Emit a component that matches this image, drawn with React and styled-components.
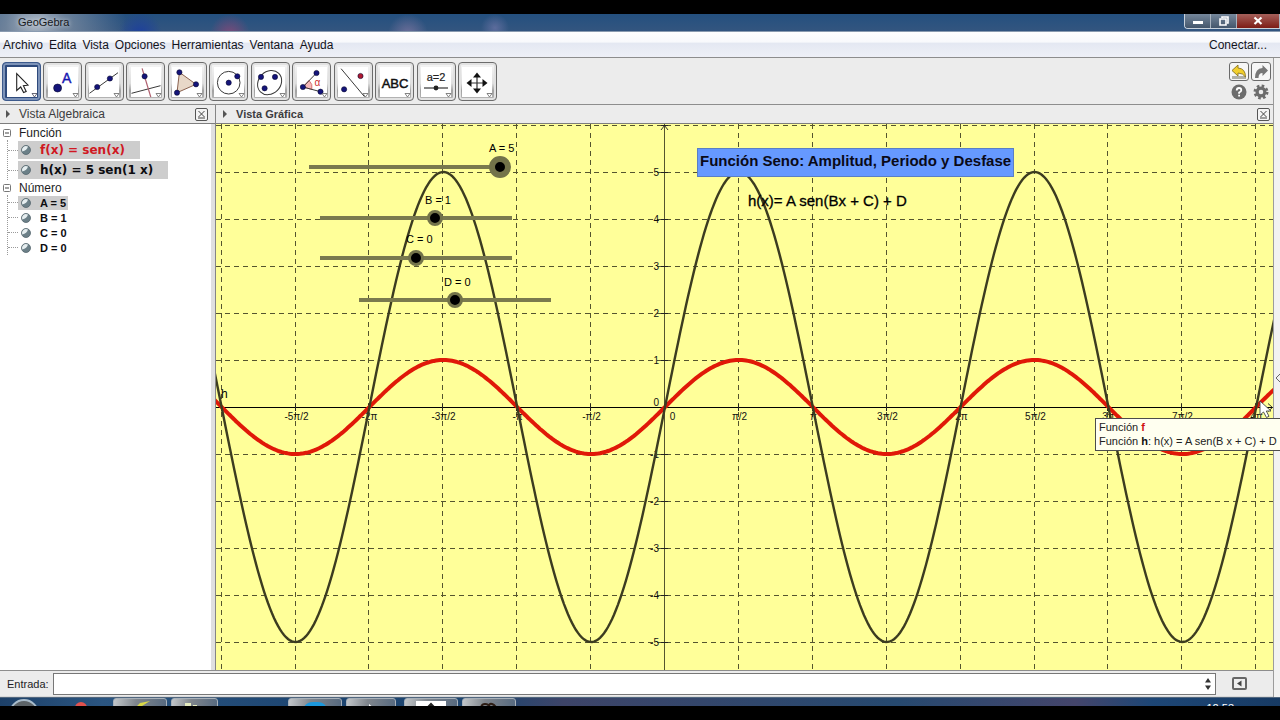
import React, { useState } from "react";
import styled, { createGlobalStyle, css } from "styled-components";

const GlobalStyle = createGlobalStyle`
  * { box-sizing: border-box; }
  body {
    margin: 0;
    background: #000;
    font-family: "Liberation Sans", Arial, sans-serif;
    font-size: 12px;
    color: #1c1c24;
  }
  button, input { font: inherit; color: inherit; }
`;

const Page = styled.div`
  display: flex;
  flex-direction: column;
  min-height: 100vh;
  padding: 14px 0;
  overflow: hidden;
`;

const TitleBar = styled.header`
  display: flex;
  justify-content: space-between;
  height: 18px;
  padding-left: 18px;
  border-bottom: 1px solid #8a9bb0;
  background:
    radial-gradient(circle at 36px 10px, #b4bdc8e6 0, #8e9aa9aa 30px, #8e9aa900 90px),
    radial-gradient(circle at 140px 20px, #1c3f9e 0, #1c3f9e00 22px),
    radial-gradient(circle at 230px 20px, #7a4a7a 0, #6a4a7a00 20px),
    radial-gradient(circle at 408px 20px, #6d6f9a 0, #6d6f9a00 20px),
    radial-gradient(circle at 495px 14px, #5c6c9c 0, #5c6c9c00 14px),
    linear-gradient(#24507f, #33557f);
`;

const AppName = styled.h1`
  margin: 0;
  font-size: 11px;
  line-height: 17px;
  font-weight: 400;
  color: #16181c;
  text-shadow: 0 0 4px #dfe5ec;
`;

const WindowButtons = styled.div`
  display: flex;
  height: 15px;
  border: 1px solid #c9d2dc;
  border-top: 0;
  border-right: 0;
  border-radius: 0 0 0 4px;
  overflow: hidden;
`;

const WindowButton = styled.button`
  display: flex;
  align-items: center;
  justify-content: center;
  width: ${(p) => (p.$close ? 43 : 26)}px;
  padding: 0;
  border: 0;
  border-right: 1px solid #aab4c0;
  background: ${(p) => (p.$close ? "linear-gradient(#a5605a, #7d1c16)" : "linear-gradient(#75879b, #44566c)")};
`;

const MenuBar = styled.nav`
  display: flex;
  align-items: center;
  gap: 6px;
  height: 26px;
  padding: 1px 13px 0 3px;
  border-bottom: 1px solid #8d8d8d;
  background: linear-gradient(#ffffff 0, #f8f9fc 40%, #e4e8f2 45%, #eef0f7 100%);
`;

const MenuLink = styled.a`
  color: #14141c;
  text-decoration: none;
  line-height: 16px;
  ${(p) => p.$end && css`margin-left: auto;`}
`;

const Workspace = styled.div`
  display: flex;
  flex: 1;
  background: #ececec;
`;

const Main = styled.div`
  display: flex;
  flex: 1;
  flex-direction: column;
  min-width: 0;
`;

const Gutter = styled.aside`
  display: flex;
  align-items: center;
  width: 7px;
  border-left: 1px solid #9c9c9c;
  background: #f2f2f2;
`;

const ToolBar = styled.div`
  display: flex;
  justify-content: space-between;
  height: 47px;
  padding: 4px 2px 0 2px;
  border-bottom: 1px solid #8d8d8d;
`;

const Tools = styled.div`
  display: flex;
  justify-content: space-between;
  width: 495px;
`;

const ToolButton = styled.button`
  display: flex;
  align-items: center;
  justify-content: center;
  width: 39px;
  height: 39px;
  padding: 0;
  border: 1px solid #6c6c6c;
  border-radius: 4px;
  background: linear-gradient(#f6f6f6 0, #dedede 55%, #a2a2a2 75%, #b8b8b8 100%);
  box-shadow: inset 0 0 0 2px #e2e2e2;
  ${(p) =>
    p.$active &&
    css`
      border-color: #3d5a8c;
      background: #2e4a7c;
      box-shadow: inset 0 0 0 2px #7d93b8;
    `}
`;

const ToolOptions = styled.div`
  display: grid;
  grid-template-columns: 20px 20px;
  grid-template-rows: 19px 20px;
  gap: 1px 2px;
`;

const OptionButton = styled.button`
  display: flex;
  align-items: center;
  justify-content: center;
  padding: 0;
  border: ${(p) => (p.$framed ? "1px solid #6a6a6a" : "0")};
  border-radius: 3px;
  background: ${(p) => (p.$framed ? "#f6f6f6" : "none")};
`;

const Views = styled.div`
  display: flex;
  flex: 1;
`;

const AlgebraView = styled.section`
  display: flex;
  flex-direction: column;
  width: 216px;
  border-right: 1px solid #858585;
  background: #fff;
  box-shadow: inset -4px 0 0 #e0e0e0;
`;

const GraphView = styled.section`
  display: flex;
  flex: 1;
  flex-direction: column;
  min-width: 0;
`;

const ViewHeader = styled.header`
  display: flex;
  align-items: center;
  gap: 9px;
  height: 19px;
  padding: 0 ${(p) => (p.$wide ? 3 : 7)}px 0 ${(p) => (p.$wide ? 7 : 6)}px;
  border-bottom: 1px solid #7d7d7d;
  background: #ececec;
`;

const ViewTitle = styled.h2`
  flex: 1;
  margin: 0;
  font-size: ${(p) => (p.$strong ? 11 : 12)}px;
  line-height: 16px;
  font-weight: ${(p) => (p.$strong ? 700 : 400)};
  color: #3c3c40;
`;

const CloseView = styled.button`
  display: flex;
  align-items: center;
  justify-content: center;
  width: 13px;
  height: 13px;
  padding: 0;
  border: 1px solid #555;
  border-radius: 2px;
  background: #f4f4f4;
`;

const Tree = styled.ul`
  margin: 0;
  padding: 1px 0 0;
  list-style: none;
`;

const Branch = styled.ul`
  margin: 0 0 0 7px;
  padding: 0;
  list-style: none;
  border-left: 1px dotted #9a9a9a;
`;

const GroupLabel = styled.div`
  display: flex;
  align-items: center;
  gap: 8px;
  height: 15px;
  padding-left: 3px;
`;

const TreeRow = styled.li`
  display: flex;
  align-items: center;
  height: ${(p) => (p.$tall ? 20 : 15)}px;
  &::before {
    content: "";
    width: 10px;
    border-top: 1px dotted #9a9a9a;
  }
`;

const TreeItem = styled.button`
  display: flex;
  align-items: center;
  gap: 9px;
  height: ${(p) => (p.$tall ? 18 : 14)}px;
  padding: 0 ${(p) => (p.$tall ? 15 : 2)}px 0 3px;
  border: 0;
  background: ${(p) => (p.$selected ? "#cdcdcd" : "none")};
  color: ${(p) => p.$color || "#0c0c10"};
  font-family: ${(p) => (p.$tall ? '"DejaVu Sans", sans-serif' : "inherit")};
  font-size: ${(p) => (p.$tall ? 12 : 11)}px;
  font-weight: 700;
  white-space: nowrap;
`;

const Canvas = styled.div`
  position: relative;
  flex: 1;
  background: #ffff99;
`;

const Plot = styled.svg`
  position: absolute;
  inset: 0;
  width: 100%;
  height: 100%;
  font-size: 10px;
`;

const Banner = styled.div`
  position: absolute;
  left: 481px;
  top: 24px;
  height: 29px;
  padding: 0 2px;
  border: 1px solid #5a7fc4;
  background: #6699ff;
  color: #0a0a18;
  font-size: 15px;
  font-weight: 700;
  line-height: 24px;
  white-space: nowrap;
`;

const Formula = styled.div`
  position: absolute;
  left: 532px;
  top: 67px;
  color: #000;
  font-size: 15px;
  line-height: 20px;
  white-space: nowrap;
  -webkit-text-stroke: 0.3px #000;
`;

const SliderBox = styled.div`
  position: absolute;
  left: ${(p) => p.$x}px;
  top: ${(p) => p.$y}px;
`;

const SliderLabel = styled.label`
  position: absolute;
  left: ${(p) => p.$x}px;
  bottom: 100%;
  padding-bottom: ${(p) => p.$gap}px;
  color: #000;
  font-size: 11px;
  line-height: 14px;
  white-space: nowrap;
`;

const thumb = css`
  appearance: none;
  width: ${(p) => p.$thumb}px;
  height: ${(p) => p.$thumb}px;
  border: ${(p) => (p.$thumb > 16 ? 6 : 3)}px solid #73734a;
  border-radius: 50%;
  background: #000;
`;

const Range = styled.input`
  appearance: none;
  display: block;
  width: ${(p) => 190 + p.$thumb}px;
  height: ${(p) => p.$thumb}px;
  margin: 0;
  background: linear-gradient(#7a7a4e, #7a7a4e) center / calc(100% - ${(p) => p.$thumb - 2}px) 4px no-repeat;
  &::-webkit-slider-thumb { ${thumb} }
  &::-moz-range-thumb { ${thumb} }
`;

const Tooltip = styled.div`
  position: absolute;
  left: 879px;
  top: 294px;
  padding: 1px 3px 2px;
  border: 1px solid #4c4c4c;
  background: #fffff0;
  color: #222;
  font-size: 11px;
  line-height: 14px;
  white-space: nowrap;
  p { margin: 0; }
  b { color: #111; }
  p:first-child b { color: #d01010; }
`;

const Pointer = styled.svg`
  position: absolute;
  left: 1043px;
  top: 276px;
`;

const InputBar = styled.form`
  display: flex;
  align-items: center;
  height: 27px;
  padding: 0 26px 0 7px;
  border-top: 1px solid #8d8d8d;
  border-bottom: 1px solid #d9d9d9;
  label { width: 46px; font-size: 11px; }
`;

const InputField = styled.div`
  display: flex;
  align-items: center;
  flex: 1;
  height: 22px;
  padding-right: 3px;
  margin-right: 16px;
  border: 1px solid #777;
  background: #fff;
  input { flex: 1; height: 18px; min-width: 0; border: 0; outline: 0; background: none; }
`;

const PlainButton = styled.button`
  display: flex;
  padding: 0;
  border: 0;
  background: none;
`;

const TaskBar = styled.footer`
  display: flex;
  height: 9px;
  overflow: hidden;
  border-top: 1px solid #51677f;
  background: linear-gradient(90deg, #1d4068 0, #2b5580 8%, #1c4470 25%, #1f466f 38%, #3d4468 44%, #26496f 70%, #44456b 84%, #1d4675 90%, #173a63 100%);
`;

const TaskButton = styled.button`
  display: flex;
  align-items: flex-start;
  justify-content: center;
  width: ${(p) => p.$w}px;
  height: 24px;
  margin-left: ${(p) => p.$gap}px;
  padding: 0;
  border: 1px solid #a7b0b9;
  border-radius: 3px;
  background: linear-gradient(100deg, #c3c7ca 0, #80868d 40%, #53677e 100%);
`;

const StartButton = styled.button`
  width: 30px;
  height: 30px;
  margin: 1px 0 0 9px;
  padding: 0;
  border: 2px solid #a9bccb;
  border-radius: 50%;
  background: #5d6468;
`;

const RecordDot = styled.span`
  width: 12px;
  height: 12px;
  margin: 4px 0 0 36px;
  border-radius: 50%;
  background: #e0514e;
`;

const Clock = styled.time`
  margin: 4px 46px 0 auto;
  color: #fff;
  font-size: 11px;
  line-height: 12px;
`;

const NAVY = "#14147a";
const Dot = ({ x, y, r = 2.6, fill = NAVY }) => <circle cx={x} cy={y} r={r} fill={fill} stroke="#080830" strokeWidth="0.6" />;
const ink = { stroke: "#3a3a3a", strokeWidth: 1, fill: "none" };

const tools = [
  ["Elige y mueve", <path d="M10.7 7.5V24.5L14.7 21L17.6 26.6L20.2 25.4L17.4 19.8L22 19.2Z" fill="#fff" stroke="#222" strokeWidth="1.1" />],
  ["Punto", <><Dot x={10.6} y={22} r={4} /><text x="15" y="17" fontSize="14" fill="#1515b0" stroke="#1515b0" strokeWidth="0.4">A</text></>],
  ["Recta", <><path {...ink} d="M1.5 27.3L30 6.7" /><Dot x={9.2} y={21} /><Dot x={21.9} y={12.5} /></>],
  ["Perpendicular", <><path {...ink} d="M1.5 27.3L30.5 19.7" /><path d="M12.1 2.3L20.8 31" stroke="#b06070" fill="none" strokeWidth="1.2" /><Dot x={14.6} y={10.3} /></>],
  ["Polígono", <><path d="M8.4 6.3L25 18.3L6 26.7Z" fill="#e8d8c8" stroke="#8a6250" /><Dot x={8.4} y={6.3} /><Dot x={25} y={18.3} /><Dot x={6} y={26.7} /></>],
  ["Circunferencia", <><circle {...ink} cx="15.7" cy="16.7" r="11.3" /><Dot x={15.7} y={16.7} /><Dot x={24.3} y={10.3} /></>],
  ["Elipse", <><ellipse {...ink} cx="15.6" cy="16.6" rx="13" ry="11" transform="rotate(-45 15.6 16.6)" /><Dot x={7} y={10.9} /><Dot x={21} y={10.9} /><Dot x={10.6} y={22.3} /></>],
  ["Ángulo", <><path d="M6.9 21L13 14.4A9 9 0 0 1 15.8 23.4Z" fill="#f6b8b8" stroke="#d06060" strokeWidth="0.8" /><path {...ink} d="M20.5 7L6.9 21L24.5 25.7" /><Dot x={20.5} y={7} /><Dot x={6.9} y={21} /><Dot x={24.5} y={25.7} /><text x="18.5" y="19.5" fontSize="10" fill="#d03030">α</text></>],
  ["Simetría", <><path {...ink} d="M4.1 2.7L27.5 30.7" /><Dot x={23.5} y={10} fill="#b01830" /><Dot x={7.1} y={23.3} /></>],
  ["Texto", <text x="16" y="21.5" textAnchor="middle" fontSize="13" fill="#111" stroke="#111" strokeWidth="0.5">ABC</text>],
  ["Deslizador", <><text x="16" y="15" textAnchor="middle" fontSize="11" fill="#222" stroke="#222" strokeWidth="0.2">a=2</text><path d="M4 22H28" stroke="#333" strokeWidth="1.2" /><circle cx="16" cy="22" r="2.4" fill="#222" /></>],
  ["Desplaza vista", <><path d="M16 10V24M9 17H23" stroke="#333" strokeWidth="1.2" /><path d="M16 6.5L20 11.5H12ZM16 27.5L20 22.5H12ZM5.5 17L10.5 13V21ZM26.5 17L21.5 13V21Z" fill="#111" /></>],
];

const ToolIcon = ({ children, active }) => (
  <svg width="32" height="32" viewBox="0 0 32 32" aria-hidden="true">
    <rect x="1" y="1" width="30" height="30" fill="#fff" />
    {children}
    <path d="M26 27.5H31L28.5 31Z" fill="#fff" stroke={active ? "#445" : "#666"} strokeWidth="0.8" />
  </svg>
);

const Disclosure = () => (
  <svg width="4" height="8" viewBox="0 0 4 8" aria-hidden="true"><path d="M0 0L4 4L0 8Z" fill="#555" /></svg>
);

const CloseIcon = () => (
  <svg width="9" height="9" viewBox="0 0 9 9" aria-hidden="true"><path d="M1.5 1L7.5 7M7.5 1L1.5 7M1 8H8" stroke="#444" strokeWidth="1" /></svg>
);

const Collapse = () => (
  <svg width="8" height="8" viewBox="0 0 8 8" aria-hidden="true"><rect x="0.5" y="0.5" width="7" height="7" rx="1" fill="#fff" stroke="#777" /><path d="M2 4H6" stroke="#444" /></svg>
);

const Marble = () => (
  <svg width="10" height="10" viewBox="0 0 10 10" aria-hidden="true"><circle cx="5" cy="5" r="4.5" fill="#6c8088" stroke="#56676e" strokeWidth="0.8" /><path d="M1.2 6.4A4 4 0 0 1 7 1.6Q6 5.800 1.2 6.4Z" fill="#e6eef0" /></svg>
);

/* Horizontal scale: one grid column is half of pi. Vertical scale: one row is one unit. */
const ORIGIN = { x: 449, y: 283 };
const HALF_PI = 73.9;
const UNIT = 47;

const wave = (amplitude) => {
  const points = [];
  for (let x = -2; x <= 1060; x += 2) {
    const angle = ((x - ORIGIN.x) / HALF_PI) * (Math.PI / 2);
    points.push(`${x},${(ORIGIN.y - amplitude * UNIT * Math.sin(angle)).toFixed(1)}`);
  }
  return points.join(" ");
};

const columns = Array.from({ length: 15 }, (_, i) => i - 6);
const rows = Array.from({ length: 12 }, (_, i) => i - 5);

const piLabel = (k) => {
  if (k === 0) return "0";
  const sign = k < 0 ? "-" : "";
  const n = Math.abs(k);
  if (n % 2) return `${sign}${n === 1 ? "" : n}π/2`;
  return `${sign}${n === 2 ? "" : n / 2}π`;
};

const colX = (k) => Math.round(ORIGIN.x + k * HALF_PI - 1) + 0.5;
const rowY = (k) => ORIGIN.y - k * UNIT + 0.5;

const FunctionPlot = () => (
  <Plot role="img" aria-label="Gráfica de f y h">
    <g stroke="#55552e" strokeWidth="1" strokeDasharray="5 4">
      {columns.filter((k) => k !== 0).map((k) => <line key={k} x1={colX(k)} x2={colX(k)} y1="0" y2="100%" />)}
      {rows.filter((k) => k !== 0).map((k) => <line key={k} y1={rowY(k)} y2={rowY(k)} x1="0" x2="100%" />)}
    </g>
    <line x1="0" x2="100%" y1={rowY(0)} y2={rowY(0)} stroke="#000" />
    <line x1={colX(0)} x2={colX(0)} y1="0" y2="100%" stroke="#55552e" />
    <path d="M445 6L448.5 1.5L452 6" fill="none" stroke="#333" />
    <path d="M1052 279.5L1056.500 283.5L1052 287.5" fill="none" stroke="#333" />
    <g stroke="#222">
      {columns.map((k) => <line key={k} x1={colX(k)} x2={colX(k)} y1="280" y2="287" />)}
      {rows.map((k) => <line key={k} y1={rowY(k)} y2={rowY(k)} x1="445" x2="452" />)}
    </g>
    <g fill="#111">
      {columns.slice(1).map((k) => (
        <text key={k} x={colX(k) + (k === 0 ? 8 : 1)} y="296" textAnchor="middle">{piLabel(k)}</text>
      ))}
      {rows.slice(0, 11).map((k) => (
        <text key={k} x="443" y={rowY(k) + (k === 0 ? -2 : 3)} textAnchor="end">{k}</text>
      ))}
    </g>
    <polyline points={wave(1)} fill="none" stroke="#e01808" strokeWidth="4" />
    <polyline points={wave(5)} fill="none" stroke="#3c3c20" strokeWidth="2.4" />
    <text x="5" y="274" fontSize="12">h</text>
  </Plot>
);

const sliders = [
  { name: "A", start: 5, x: 83, y: 32, thumb: 22, labelX: 190, gap: 1 },
  { name: "B", start: 1, x: 97, y: 86, thumb: 16, labelX: 112, gap: 3 },
  { name: "C", start: 0, x: 97, y: 126, thumb: 16, labelX: 93, gap: 4 },
  { name: "D", start: 0, x: 136, y: 168, thumb: 16, labelX: 92, gap: 3 },
];

const Slider = ({ name, start, x, y, thumb: size, labelX, gap }) => {
  const [value, setValue] = useState(start);
  return (
    <SliderBox $x={x} $y={y}>
      <SliderLabel htmlFor={`slider-${name}`} $x={labelX} $gap={gap}>{`${name} = ${value}`}</SliderLabel>
      <Range id={`slider-${name}`} type="range" min="-5" max="5" value={value} $thumb={size} onChange={(e) => setValue(+e.target.value)} />
    </SliderBox>
  );
};

const numbers = [["A = 5", true], ["B = 1"], ["C = 0"], ["D = 0"]];
const menus = ["Archivo", "Edita", "Vista", "Opciones", "Herramientas", "Ventana", "Ayuda"];

export default function App() {
  return (
    <Page>
      <GlobalStyle />
      <TitleBar>
        <AppName>GeoGebra</AppName>
        <WindowButtons>
          <WindowButton aria-label="Minimizar"><svg width="10" height="10"><rect y="5" width="10" height="3" fill="#fff" /></svg></WindowButton>
          <WindowButton aria-label="Restaurar"><svg width="10" height="10"><path d="M3 2V1H9V7H8M1 3H7V9H1Z" fill="none" stroke="#fff" strokeWidth="1.6" /></svg></WindowButton>
          <WindowButton $close aria-label="Cerrar"><svg width="10" height="10"><path d="M1.5 1.5L8.5 8M8.5 1.5L1.5 8" stroke="#fff" strokeWidth="2.2" /></svg></WindowButton>
        </WindowButtons>
      </TitleBar>
      <MenuBar>
        {menus.map((m) => <MenuLink key={m} href="#">{m}</MenuLink>)}
        <MenuLink href="#" $end>Conectar...</MenuLink>
      </MenuBar>
      <Workspace>
        <Main>
          <ToolBar>
            <Tools>
              {tools.map(([name, icon], i) => (
                <ToolButton key={name} aria-label={name} $active={i === 0}><ToolIcon active={i === 0}>{icon}</ToolIcon></ToolButton>
              ))}
            </Tools>
            <ToolOptions>
              <OptionButton $framed aria-label="Deshacer">
                <svg width="16" height="16" viewBox="0 0 16 16"><path d="M1 12H15V15H1Z" fill="#b0b0a8" /><path d="M1 6.5L7 1V4Q14.5 4.5 14.5 13Q12 9 7 9V12Z" fill="#f2cf2c" stroke="#8a7420" strokeWidth="0.9" /></svg>
              </OptionButton>
              <OptionButton $framed aria-label="Rehacer">
                <svg width="16" height="16" viewBox="0 0 16 16"><path d="M15 6.5L9.5 1V4Q2 4.500 2 14H5.500Q5.500 9 9.500 9V12Z" fill="#777" /></svg>
              </OptionButton>
              <OptionButton aria-label="Ayuda">
                <svg width="16" height="16" viewBox="0 0 16 16"><circle cx="8" cy="8" r="7.500" fill="#6c6c6c" /><path d="M5.700 6.500Q5.700 4 8 4T10.300 6.200Q10.300 7.400 8.100 8.500V9.700M8.100 10.800V12.600" fill="none" stroke="#fff" strokeWidth="1.8" /></svg>
              </OptionButton>
              <OptionButton aria-label="Preferencias">
                <svg width="16" height="16" viewBox="0 0 16 16"><circle cx="8" cy="8" r="6" fill="none" stroke="#6c6c6c" strokeWidth="3" strokeDasharray="2.500 2.200" /><circle cx="8" cy="8" r="3.900" fill="none" stroke="#6c6c6c" strokeWidth="3.200" /></svg>
              </OptionButton>
            </ToolOptions>
          </ToolBar>
          <Views>
            <AlgebraView>
              <ViewHeader>
                <Disclosure />
                <ViewTitle>Vista Algebraica</ViewTitle>
                <CloseView aria-label="Cerrar vista algebraica"><CloseIcon /></CloseView>
              </ViewHeader>
              <Tree>
                <li>
                  <GroupLabel><Collapse />Función</GroupLabel>
                  <Branch>
                    <TreeRow $tall><TreeItem $tall $selected $color="#d01822"><Marble />f(x) = sen(x)</TreeItem></TreeRow>
                    <TreeRow $tall><TreeItem $tall $selected><Marble />h(x) = 5 sen(1 x)</TreeItem></TreeRow>
                  </Branch>
                </li>
                <li>
                  <GroupLabel><Collapse />Número</GroupLabel>
                  <Branch>
                    {numbers.map(([text, selected]) => (
                      <TreeRow key={text}><TreeItem $selected={selected}><Marble />{text}</TreeItem></TreeRow>
                    ))}
                  </Branch>
                </li>
              </Tree>
            </AlgebraView>
            <GraphView>
              <ViewHeader $wide>
                <Disclosure />
                <ViewTitle $strong>Vista Gráfica</ViewTitle>
                <CloseView aria-label="Cerrar vista gráfica"><CloseIcon /></CloseView>
              </ViewHeader>
              <Canvas>
                <FunctionPlot />
                {sliders.map((s) => <Slider key={s.name} {...s} />)}
                <Banner>Función Seno: Amplitud, Periodo y Desfase</Banner>
                <Formula>h(x)= A sen(Bx + C) + D</Formula>
                <Tooltip role="tooltip">
                  <p>Función <b>f</b></p>
                  <p>Función <b>h</b>: h(x) = A sen(B x + C) + D</p>
                </Tooltip>
                <Pointer width="14" height="20" viewBox="0 0 14 20" aria-hidden="true">
                  <path d="M1 1V15L4.500 12L7.500 17.500L10 16.300L7.300 11H12Z" fill="#fff" stroke="#444" strokeWidth="0.9" />
                </Pointer>
              </Canvas>
            </GraphView>
          </Views>
          <InputBar onSubmit={(e) => e.preventDefault()}>
            <label htmlFor="entrada">Entrada:</label>
            <InputField>
              <input id="entrada" type="text" />
              <PlainButton type="button" aria-label="Historial">
                <svg width="8" height="12" viewBox="0 0 8 12"><path d="M4 0L7 4.500H1ZM4 12L7 7.500H1Z" fill="#333" /></svg>
              </PlainButton>
            </InputField>
            <PlainButton type="button" aria-label="Ayuda de entrada">
              <svg width="15" height="13" viewBox="0 0 15 13"><rect x="1" y="1" width="13" height="11" rx="1" fill="#eee" stroke="#666" strokeWidth="2" /><path d="M9.500 3.500V9.500L5 6.500Z" fill="#444" /></svg>
            </PlainButton>
          </InputBar>
        </Main>
        <Gutter>
          <svg width="6" height="10" viewBox="0 0 6 10" aria-hidden="true"><path d="M6 1L2 5L6 9" fill="none" stroke="#666" /></svg>
        </Gutter>
      </Workspace>
      <TaskBar>
        <StartButton aria-label="Inicio" />
        <RecordDot />
        <TaskButton $w={54} $gap={26} aria-label="Notas"><svg width="24" height="10"><path d="M6 10L12 4L22 2L14 7L12 10Z" fill="#d8d848" /></svg></TaskButton>
        <TaskButton $w={47} $gap={4} aria-label="Carpeta"><svg width="24" height="10"><path d="M2 4H8V10H2ZM10 6H14V10H10Z" fill="#e6ecc0" /></svg></TaskButton>
        <TaskButton $w={54} $gap={70} aria-label="Navegador"><svg width="24" height="10"><path d="M0 10Q3 2 12 3Q22 2 24 10Z" fill="#1c98dc" /></svg></TaskButton>
        <TaskButton $w={50} $gap={4} aria-label="Reproductor"><svg width="24" height="10"><path d="M10 5L16 10H10Z" fill="#fff" /></svg></TaskButton>
        <TaskButton $w={54} $gap={8} aria-label="GeoGebra"><svg width="30" height="10"><path d="M0 2H30V10H0Z" fill="#fff" /><path d="M12 8L15 5L18 8" fill="none" stroke="#222" strokeWidth="2" /></svg></TaskButton>
        <TaskButton $w={54} $gap={4} aria-label="Grabadora"><svg width="24" height="10"><path d="M4 10Q4 5 8 5T12 8Q12 4 15 5T20 10" fill="none" stroke="#2c1c14" strokeWidth="2" /></svg></TaskButton>
        <Clock>12:53</Clock>
      </TaskBar>
    </Page>
  );
}
